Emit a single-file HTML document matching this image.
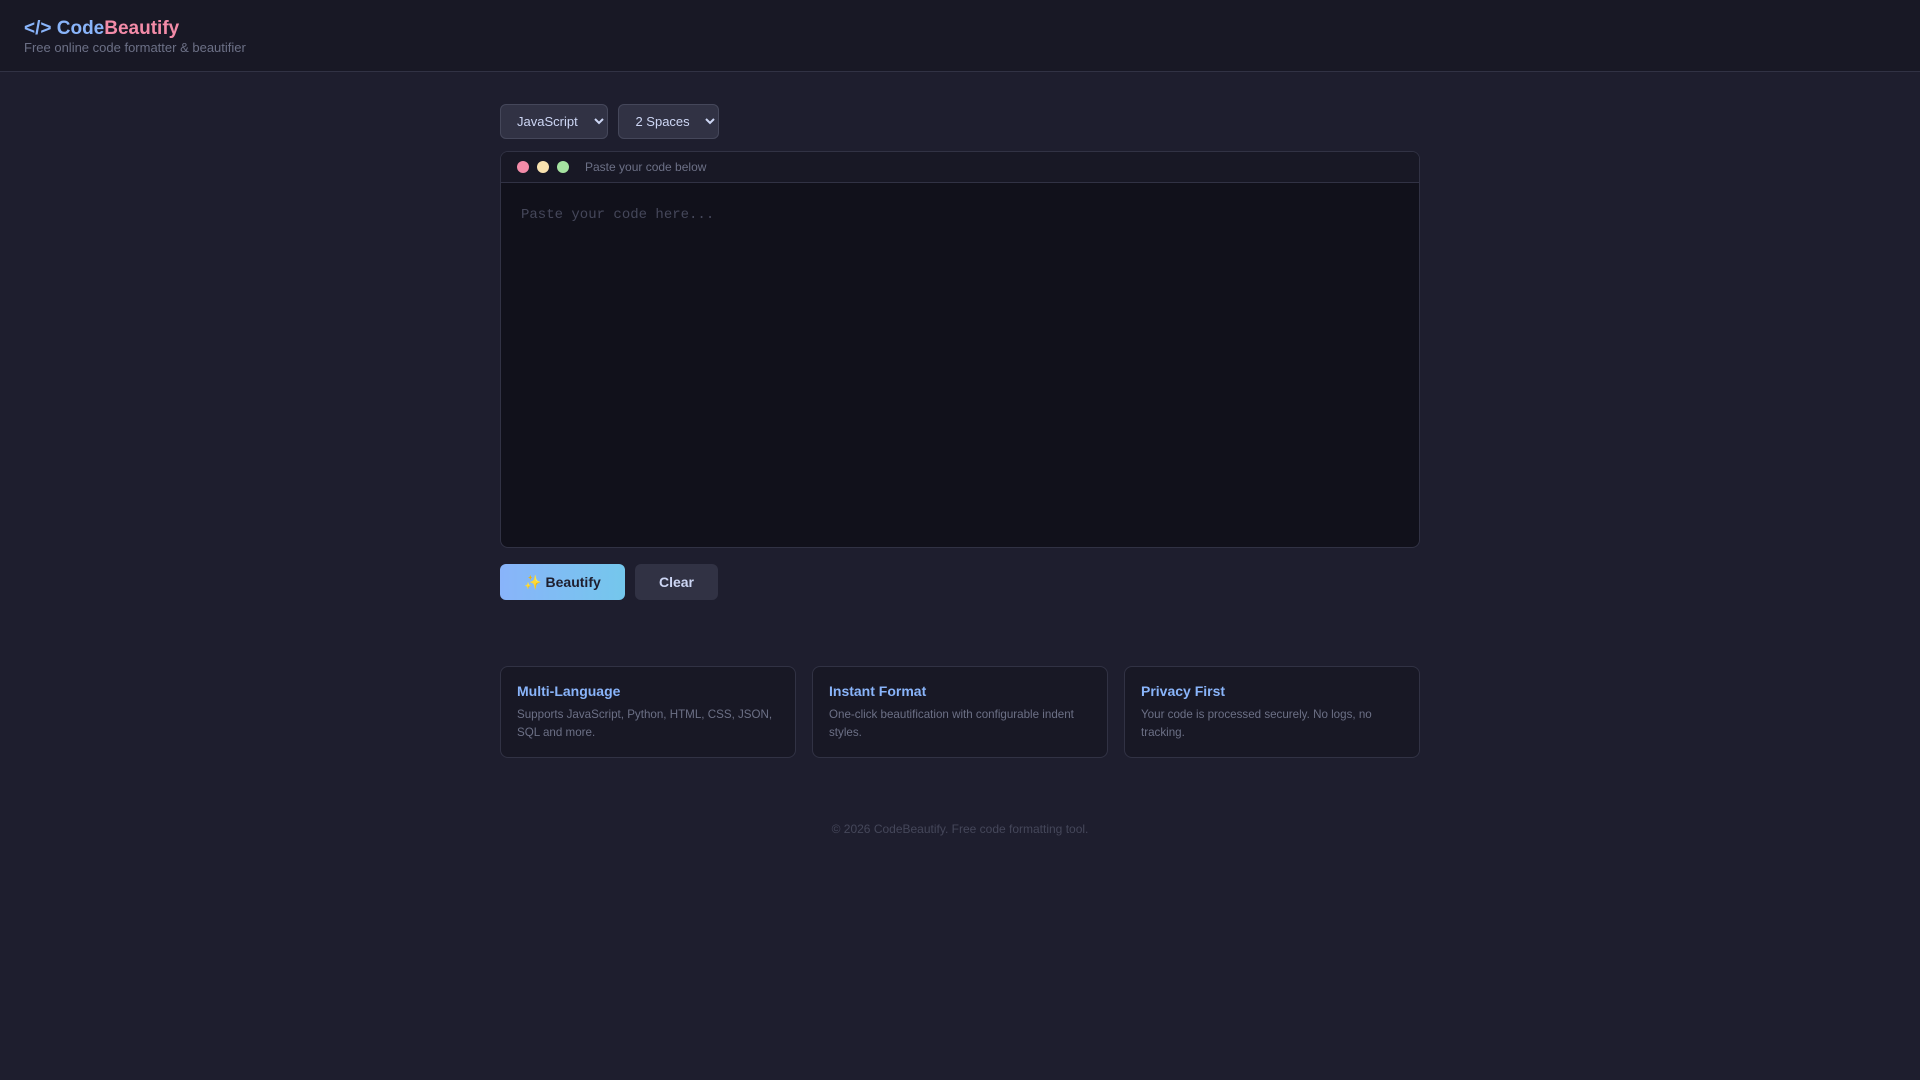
<!DOCTYPE html>
<html><head><meta charset="utf-8"><style>
*{box-sizing:border-box;margin:0;padding:0}
body{width:1920px;height:1080px;background:#1e1e2e;font-family:"Liberation Sans",sans-serif;color:#cdd6f4;overflow:hidden}
header{height:72px;background:#181825;border-bottom:1px solid #313244;padding:17px 24px 0}
.logo{font-size:19px;font-weight:bold;color:#89b4fa;line-height:24px}
.logo span{color:#f38ba8}
.sub{font-size:13px;color:#6c7086;margin-top:-1px}
.wrap{position:absolute;left:500px;width:920px;top:104px}
select{height:35px;background:#313244;border:1px solid #45475a;border-radius:6px;color:#cdd6f4;font-size:13px;padding:0 4px 0 12px;font-family:"Liberation Sans",sans-serif}
.ed{position:absolute;top:47px;left:0;width:920px;height:397px;border:1px solid #313244;border-radius:8px;background:#11111b;overflow:hidden}
.bar{height:31px;background:#181825;border-bottom:1px solid #313244;display:flex;align-items:center;padding-left:16px}
.d{width:12px;height:12px;border-radius:50%;margin-right:8px}
.bar .t{font-size:12px;color:#6c7086;margin-left:8px}
.ph{font-family:"Liberation Mono",monospace;font-size:14px;color:#45475a;padding:24px 20px}
.btns{position:absolute;top:460px;left:0;display:flex;gap:10px}
.b{height:36px;border-radius:6px;font-weight:bold;font-size:14px;display:flex;align-items:center;justify-content:center}
.cards{position:absolute;top:562px;left:0;display:flex;gap:16px}
.c{width:296px;height:92px;background:#181825;border:1px solid #313244;border-radius:8px;padding:16px 16px}
.c h3{font-size:14px;color:#89b4fa;margin-bottom:7px}
.c p{font-size:11.6px;color:#6c7086;line-height:18px}
.f{position:absolute;top:718px;width:920px;text-align:center;font-size:12px;color:#45475a}
</style></head><body>
<header><div class="logo">&lt;/&gt; Code<span>Beautify</span></div><div class="sub">Free online code formatter &amp; beautifier</div></header>
<div class="wrap">
<select style="width:108px"><option>JavaScript</option></select>
<select style="width:101px;margin-left:6px"><option>2 Spaces</option></select>
<div class="ed"><div class="bar"><div class="d" style="background:#f38ba8"></div><div class="d" style="background:#f9e2af"></div><div class="d" style="background:#a6e3a1"></div><span class="t">Paste your code below</span></div><div class="ph">Paste your code here...</div></div>
<div class="btns"><div class="b" style="width:125px;background:linear-gradient(90deg,#89b4fa,#74c7ec);color:#1e1e2e">✨ Beautify</div><div class="b" style="width:83px;background:#313244;color:#cdd6f4">Clear</div></div>
<div class="cards">
<div class="c"><h3>Multi-Language</h3><p>Supports JavaScript, Python, HTML, CSS, JSON, SQL and more.</p></div>
<div class="c"><h3>Instant Format</h3><p>One-click beautification with configurable indent styles.</p></div>
<div class="c"><h3>Privacy First</h3><p>Your code is processed securely. No logs, no tracking.</p></div>
</div>
<div class="f">© 2026 CodeBeautify. Free code formatting tool.</div>
</div>
</body></html>
